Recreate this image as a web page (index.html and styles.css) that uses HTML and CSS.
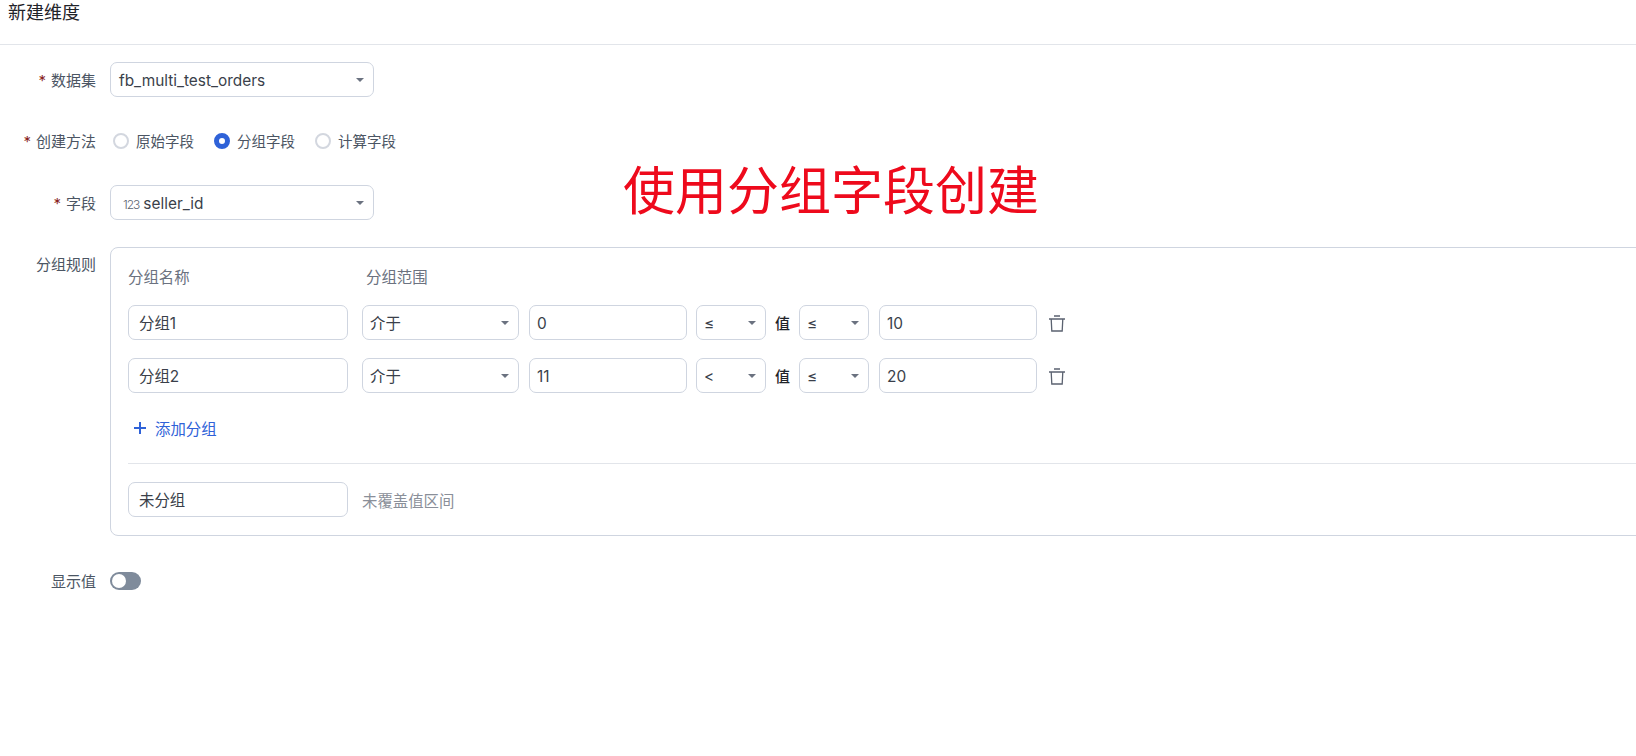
FILE: index.html
```html
<!DOCTYPE html>
<html lang="zh-CN">
<head>
    <meta charset="UTF-8">
    <title>新建维度</title>
    <link rel="stylesheet" href="styles.css">
</head>
<body>
    <div class="page-header">新建维度</div>

    <div class="form">
        <div class="form-row">
            <div class="form-label required">数据集</div>
            <div class="field select dataset-select"><span>fb_multi_test_orders</span><i class="caret"></i></div>
        </div>

        <div class="form-row method-row">
            <div class="form-label required">创建方法</div>
            <div class="radio-group">
                <div class="radio"><i class="radio-dot"></i>原始字段</div>
                <div class="radio checked"><i class="radio-dot"></i>分组字段</div>
                <div class="radio"><i class="radio-dot"></i>计算字段</div>
            </div>
        </div>

        <div class="form-row">
            <div class="form-label required">字段</div>
            <div class="field select dataset-select"><span><em class="type-tag">123</em>seller_id</span><i class="caret"></i></div>
        </div>

        <div class="form-row rules-row">
            <div class="form-label">分组规则</div>
            <div class="rules-box">
                <div class="rules-head">
                    <div class="col-name">分组名称</div>
                    <div>分组范围</div>
                </div>

                <div class="rule">
                    <div class="field col-name">分组1</div>
                    <div class="field select range-type"><span>介于</span><i class="caret"></i></div>
                    <div class="field range-value">0</div>
                    <div class="field select op"><span>≤</span><i class="caret"></i></div>
                    <div class="value-label">值</div>
                    <div class="field select op"><span>≤</span><i class="caret"></i></div>
                    <div class="field range-value">10</div>
                    <svg class="trash" viewBox="0 0 18 18" fill="none" stroke="currentColor" stroke-width="1.3"><path d="M1 5h16M6 2h6M3.2 5l.6 12h10.4l.6-12"/></svg>
                </div>

                <div class="rule">
                    <div class="field col-name">分组2</div>
                    <div class="field select range-type"><span>介于</span><i class="caret"></i></div>
                    <div class="field range-value">11</div>
                    <div class="field select op"><span>&lt;</span><i class="caret"></i></div>
                    <div class="value-label">值</div>
                    <div class="field select op"><span>≤</span><i class="caret"></i></div>
                    <div class="field range-value">20</div>
                    <svg class="trash" viewBox="0 0 18 18" fill="none" stroke="currentColor" stroke-width="1.3"><path d="M1 5h16M6 2h6M3.2 5l.6 12h10.4l.6-12"/></svg>
                </div>

                <div class="add-group">
                    <svg viewBox="0 0 14 14" fill="none" stroke="currentColor" stroke-width="2"><path d="M7 1v12M1 7h12"/></svg>
                    添加分组
                </div>

                <div class="rules-footer">
                    <div class="field col-name">未分组</div>
                    <div class="hint">未覆盖值区间</div>
                </div>
            </div>
        </div>

        <div class="form-row switch-row">
            <div class="form-label">显示值</div>
            <div class="switch"><i></i></div>
        </div>
    </div>

    <div class="annotation">使用分组字段创建</div>
</body>
</html>
```

FILE: styles.css
```css
* {
    box-sizing: border-box;
}

html, body {
    overflow: hidden;
}

body {
    margin: 0;
    height: 756px;
    position: relative;
    background-color: white;
    color: #3b4252;
    font-family: Inter, "Noto Sans CJK SC", sans-serif;
    font-size: 15px;
}

.page-header {
    height: 45px;
    padding: 2px 0 0 8px;
    border-bottom: 1px solid #e2e5ea;
    color: #1f2329;
    font-size: 18px;
    line-height: 21px;
}

.form {
    padding-top: 17px;
}

.form-row {
    display: flex;
    margin-bottom: 27px;
}

.form-label {
    flex: none;
    width: 96px;
    margin-right: 14px;
    height: 35px;
    line-height: 37px;
    text-align: right;
    color: #4b5563;
}

.required::before {
    content: "*";
    margin-right: 5px;
    color: #8a1f1f;
}

.field {
    flex: none;
    height: 35px;
    padding: 1px 10px 0;
    line-height: 33px;
    border: 1px solid #cfd5e0;
    border-radius: 7px;
    color: #3a3f4a;
    background-color: white;
    font-size: 15.4px;
}

.select {
    display: flex;
    justify-content: space-between;
    align-items: center;
    padding: 2px 8px 0;
}

.caret {
    width: 0;
    height: 0;
    margin: 0 1px 2px 0;
    border-left: 4.5px solid transparent;
    border-right: 4.5px solid transparent;
    border-top: 4.5px solid #6b7280;
}

.dataset-select {
    width: 264px;
}

.type-tag {
    margin: 0 4px;
    font-style: normal;
    font-size: 12px;
    font-weight: 300;
    letter-spacing: -1px;
    color: #5b6270;
}

.method-row {
    height: 34px;
}

.method-row .form-label {
    line-height: 35px;
}

.radio-group {
    display: flex;
    align-items: center;
    height: 34px;
    margin-left: 3px;
}

.radio {
    display: flex;
    align-items: center;
    margin-right: 20px;
    padding-bottom: 2px;
    color: #4b5563;
    font-size: 14.5px;
}

.radio-dot {
    width: 16px;
    height: 16px;
    margin: 2px 7px 0 0;
    border: 2px solid #d3d7df;
    border-radius: 50%;
}

.checked .radio-dot {
    border: 5px solid #2f62d8;
}

.rules-box {
    flex: none;
    width: 1600px;
    height: 289px;
    padding: 19px 17px 0;
    border: 1px solid #cfd5e0;
    border-radius: 8px;
}

.rules-row .form-label {
    height: 21px;
    line-height: 21px;
    margin-top: 7px;
}

.rules-head {
    display: flex;
    height: 22px;
    line-height: 22px;
    margin-bottom: 16px;
    color: #6b7280;
    font-size: 15.4px;
}

.rules-head .col-name {
    margin-right: 18px;
    width: 220px;
}

.rule {
    display: flex;
    align-items: center;
    margin-bottom: 18px;
}

.col-name {
    width: 220px;
}

.rule .col-name {
    margin-right: 14px;
}

.range-type {
    width: 157px;
    margin-right: 10px;
    padding-left: 7px;
}

.range-value {
    width: 158px;
    padding: 1px 7px 0;
}

.op {
    width: 70px;
    margin-left: 9px;
    padding-left: 7px;
}

.value-label {
    width: 33px;
    margin-right: -9px;
    text-align: center;
    color: #1f2329;
    font-weight: 500;
}

.op + .value-label + .op + .range-value {
    margin-left: 10px;
}

.trash {
    width: 18px;
    height: 18px;
    margin-left: 11px;
    color: #5b6270;
}

.add-group {
    display: flex;
    align-items: center;
    height: 20px;
    margin: 25px 0 25px 5px;
    color: #2f62d8;
    font-size: 15.4px;
}

.add-group svg {
    width: 14px;
    height: 14px;
    margin-right: 8px;
}

.rules-footer {
    display: flex;
    align-items: center;
    padding-top: 18px;
    border-top: 1px solid #e2e5ea;
}

.rules-footer .col-name {
    margin-right: 14px;
}

.hint {
    color: #8a8f99;
    font-size: 15.4px;
}

.switch-row {
    margin-top: 34px;
    align-items: center;
}

.switch-row .form-label {
    height: 20px;
    margin-top: 2px;
    line-height: 20px;
}

.switch {
    width: 31px;
    height: 18px;
    padding: 2px;
    border-radius: 9px;
    background-color: #7f8b9b;
}

.switch i {
    display: block;
    width: 14px;
    height: 14px;
    border-radius: 50%;
    background-color: white;
}

/* red note laid over the form */
.annotation {
    position: absolute;
    left: 623px;
    top: 157px;
    font-size: 52px;
    line-height: 70px;
    color: #ee0a1c;
    white-space: nowrap;
}
```
